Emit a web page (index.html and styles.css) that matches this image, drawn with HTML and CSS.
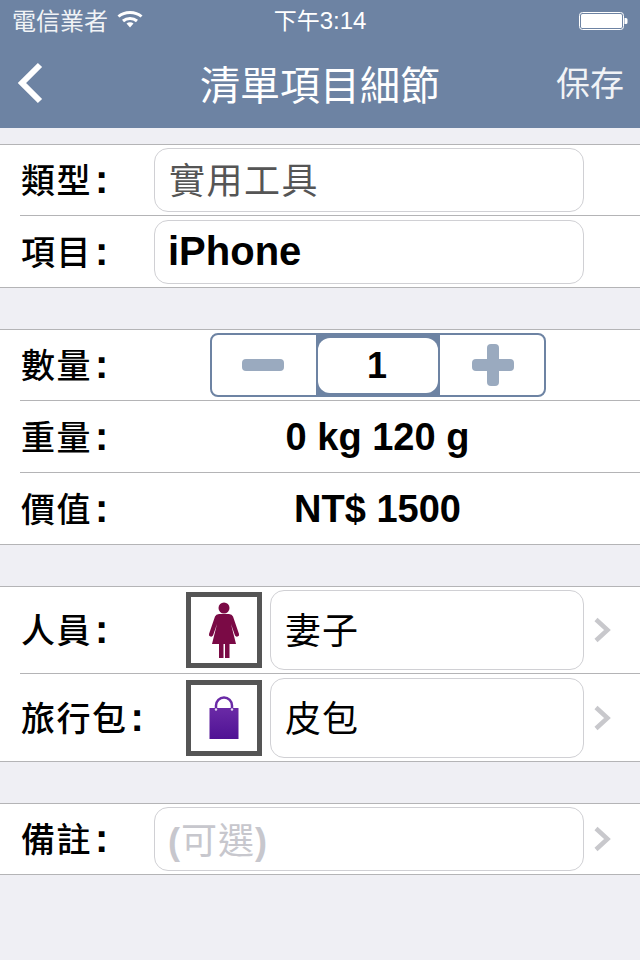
FILE: index.html
```html
<!DOCTYPE html>
<html lang="zh-Hant">
<head>
<meta charset="utf-8">
<title>清單項目細節</title>
<link rel="stylesheet" href="styles.css">
</head>
<body>
<header class="header">
  <div class="status">
    <div class="status-left">
      <span class="carrier">電信業者</span>
      <svg class="wifi" width="26" height="18" viewBox="0 0 26 18"><path d="M1.500 6.500C7.500 1 18.500 1 24.500 6.500" fill="none" stroke="#fff" stroke-width="3"/><path d="M6 11C10 7.500 16 7.500 20 11" fill="none" stroke="#fff" stroke-width="3"/><path d="M9.500 13.500C11.500 11.800 14.500 11.800 16.500 13.500L13 17.500Z" fill="#fff"/></svg>
    </div>
    <div class="time">下午<span class="time-num">3:14</span></div>
    <svg class="battery" width="49" height="20" viewBox="0 0 49 20"><rect x="0.500" y="1.500" width="44" height="17" rx="3" fill="none" stroke="#fff"/><rect x="2" y="3" width="41" height="14" rx="1.500" fill="#fff"/><path d="M45.500 7h1.500a1.500 1.500 0 0 1 1.500 1.500v3a1.500 1.500 0 0 1-1.500 1.500h-1.500Z" fill="#fff"/></svg>
  </div>
  <nav class="nav">
    <svg class="back" width="28" height="42" viewBox="0 0 28 42"><path d="M24 3L6 21L24 39" fill="none" stroke="#fff" stroke-width="6"/></svg>
    <h1 class="title">清單項目細節</h1>
    <span class="save">保存</span>
  </nav>
</header>
<main class="content">
  <section class="group">
    <div class="row">
      <span class="label">類型<b>:</b></span>
      <div class="field field-type"><span class="field-text">實用工具</span></div>
    </div>
    <div class="row row-short">
      <span class="label">項目<b>:</b></span>
      <div class="field field-name">iPhone</div>
    </div>
  </section>
  <section class="group">
    <div class="row">
      <span class="label">數量<b>:</b></span>
      <div class="stepper">
        <div class="step step-minus"><svg width="42" height="12" viewBox="0 0 42 12"><rect width="42" height="12" rx="4" fill="#9aaabf"/></svg></div>
        <div class="step-value"><span class="step-num">1</span></div>
        <div class="step step-plus"><svg width="42" height="42" viewBox="0 0 42 42"><rect x="0" y="15" width="42" height="12" rx="4" fill="#9aaabf"/><rect x="15" y="0" width="12" height="42" rx="4" fill="#9aaabf"/></svg></div>
      </div>
    </div>
    <div class="row row-mid">
      <span class="label">重量<b>:</b></span>
      <div class="value">0 kg 120 g</div>
    </div>
    <div class="row row-mid">
      <span class="label">價值<b>:</b></span>
      <div class="value">NT$ 1500</div>
    </div>
  </section>
  <section class="group">
    <div class="row row-tall">
      <span class="label">人員<b>:</b></span>
      <div class="thumb"><svg width="32" height="56" viewBox="0 0 32 56"><circle cx="16" cy="6" r="5.500" fill="#7a0a45"/><path d="M11 12H21Q24 12 25 14.500L31 32Q31.500 34 29.500 34.500Q28 35 27 33.500L23 22L28 42H4L9 22L5 33.500Q4 35 2.500 34.500Q.5 34 1 32L7 14.500Q8 12 11 12Z" fill="#7a0a45"/><rect x="11" y="42" width="4.500" height="14" fill="#7a0a45"/><rect x="17" y="42" width="4.500" height="14" fill="#7a0a45"/></svg></div>
      <div class="field field-link"><span class="field-text">妻子</span></div>
      <svg class="chev" width="18" height="26" viewBox="0 0 18 26"><path d="M2 2.500L13.500 13L2 23.500" fill="none" stroke="#c8c8cc" stroke-width="4.500"/></svg>
    </div>
    <div class="row row-tall">
      <span class="label">旅行包<b>:</b></span>
      <div class="thumb"><svg width="30" height="44" viewBox="0 0 30 44"><defs><linearGradient id="bag" x1="0" y1="0" x2="0" y2="1"><stop offset="0" stop-color="#6a2aa6"/><stop offset="1" stop-color="#4f1294"/></linearGradient></defs><rect x="0.500" y="12" width="29" height="31" fill="url(#bag)"/><path d="M7 13V9.500A8 8 0 0 1 23 9.500V13" fill="none" stroke="#6a2aa6" stroke-width="2.500"/><circle cx="7" cy="13.500" r="1.200" fill="#e6dcf0"/><circle cx="23" cy="13.500" r="1.200" fill="#e6dcf0"/></svg></div>
      <div class="field field-link"><span class="field-text">皮包</span></div>
      <svg class="chev" width="18" height="26" viewBox="0 0 18 26"><path d="M2 2.500L13.500 13L2 23.500" fill="none" stroke="#c8c8cc" stroke-width="4.500"/></svg>
    </div>
  </section>
  <section class="group">
    <div class="row">
      <span class="label">備註<b>:</b></span>
      <div class="field field-note"><span class="field-text"><b>(</b>可選<b>)</b></span></div>
      <svg class="chev" width="18" height="26" viewBox="0 0 18 26"><path d="M2 2.500L13.500 13L2 23.500" fill="none" stroke="#c8c8cc" stroke-width="4.500"/></svg>
    </div>
  </section>
</main>
</body>
</html>
```
FILE: styles.css
```css
* { box-sizing: border-box; }
html, body { margin: 0; padding: 0; }
body {
  width: 640px;
  height: 960px;
  overflow: hidden;
  background: #efeff4;
  color: #000;
  font-family: "Noto Sans CJK TC", "Liberation Sans", sans-serif;
}
.header {
  height: 128px;
  background: #6d83a3;
  color: #fff;
}
.status {
  height: 40px;
  padding: 0 12px 0 12px;
  display: grid;
  grid-template-columns: 1fr auto 1fr;
  align-items: center;
}
.status-left { display: flex; align-items: center; gap: 9px; }
.carrier { font-size: 24px; line-height: 40px; color: #f1f3f6; margin-top: -1px; }
.wifi { display: block; margin-top: -4px; }
.time { font-size: 23px; line-height: 40px; margin-top: -1px; }
.time-num { font-family: "Liberation Sans", sans-serif; font-size: 24px; }
.battery { justify-self: end; }
.nav {
  height: 88px;
  padding: 0 16px;
  display: grid;
  grid-template-columns: 1fr auto 1fr;
  align-items: center;
}
.back { display: block; margin-top: -2px; }
.title { margin: -2px 0 0; font-size: 40px; font-weight: 400; line-height: 48px; }
.save { justify-self: end; font-size: 34px; line-height: 44px; color: #f1f3f6; margin-top: -4px; }
.content { padding-top: 16px; display: flex; flex-direction: column; gap: 41px; }
.group {
  background: #fff;
  border-top: 1px solid #b4b4b6;
  border-bottom: 1px solid #b4b4b6;
  display: flex;
  flex-direction: column;
}
.row {
  position: relative;
  height: 70px;
  padding-left: 21px;
  display: flex;
  align-items: center;
}
.row + .row { border-top: 1px solid #b4b4b6; margin-left: 20px; padding-left: 1px; }
.row-short { height: 72px; }
.row-mid { height: 72px; }
.row-tall { height: 86px; }
.row-tall + .row-tall { height: 88px; }
.label { font-size: 34px; line-height: 44px; width: 133px; flex: none; font-weight: 500; margin-top: -2px; letter-spacing: 1.500px; white-space: nowrap; }
.label b { font-family: "Liberation Sans", sans-serif; font-weight: 700; font-size: 40px; line-height: 0; margin-left: 3px; }
.field {
  width: 430px;
  height: 64px;
  border: 1px solid #d0d0d4;
  border-radius: 14px;
  background: #fff;
  padding-left: 14px;
  display: flex;
  align-items: center;
  font-size: 36px;
}
.field-text { display: block; margin-top: -4px; }
.field-type { color: #555; letter-spacing: 1.500px; }
.field-name { font-family: "Liberation Sans", sans-serif; font-weight: 700; font-size: 40px; padding-left: 13px; }
.field-note { color: #c7c7cd; letter-spacing: 1px; padding-left: 13px; }
.field-note .field-text { margin-top: -2px; }
.field-note b { font-family: "Liberation Sans", sans-serif; font-weight: 700; }
.field-link { width: 314px; height: 80px; letter-spacing: 1px; }
.thumb {
  width: 76px;
  height: 76px;
  margin-left: 32px;
  margin-right: 8px;
  flex: none;
  border: 5px solid #555;
  background: #fff;
  display: flex;
  align-items: center;
  justify-content: center;
}
.chev { position: absolute; left: 594px; top: 50%; margin-top: -13px; }
.row + .row .chev { left: 574px; }
.stepper {
  margin-left: 56px;
  width: 336px;
  height: 64px;
  border: 2px solid #6d83a3;
  border-radius: 8px;
  display: grid;
  grid-template-columns: 104px 124px 1fr;
  overflow: hidden;
}
.step { display: flex; align-items: center; justify-content: center; }
.step-minus { padding-right: 2px; }
.step-plus { padding-left: 2px; }
.step-value {
  background: #6d83a3;
  padding: 3px 2px 2px;
  display: flex;
}
.step-num {
  flex: 1;
  background: #fff;
  border-radius: 12px;
  font-family: "Liberation Sans", sans-serif;
  font-weight: 700;
  font-size: 36px;
  padding-right: 2px;
  display: flex;
  align-items: center;
  justify-content: center;
}
.value {
  margin-left: 56px;
  width: 336px;
  text-align: center;
  font-family: "Liberation Sans", sans-serif;
  font-weight: 700;
  font-size: 38px;
  padding-top: 1px;
  padding-right: 1px;
}
```
